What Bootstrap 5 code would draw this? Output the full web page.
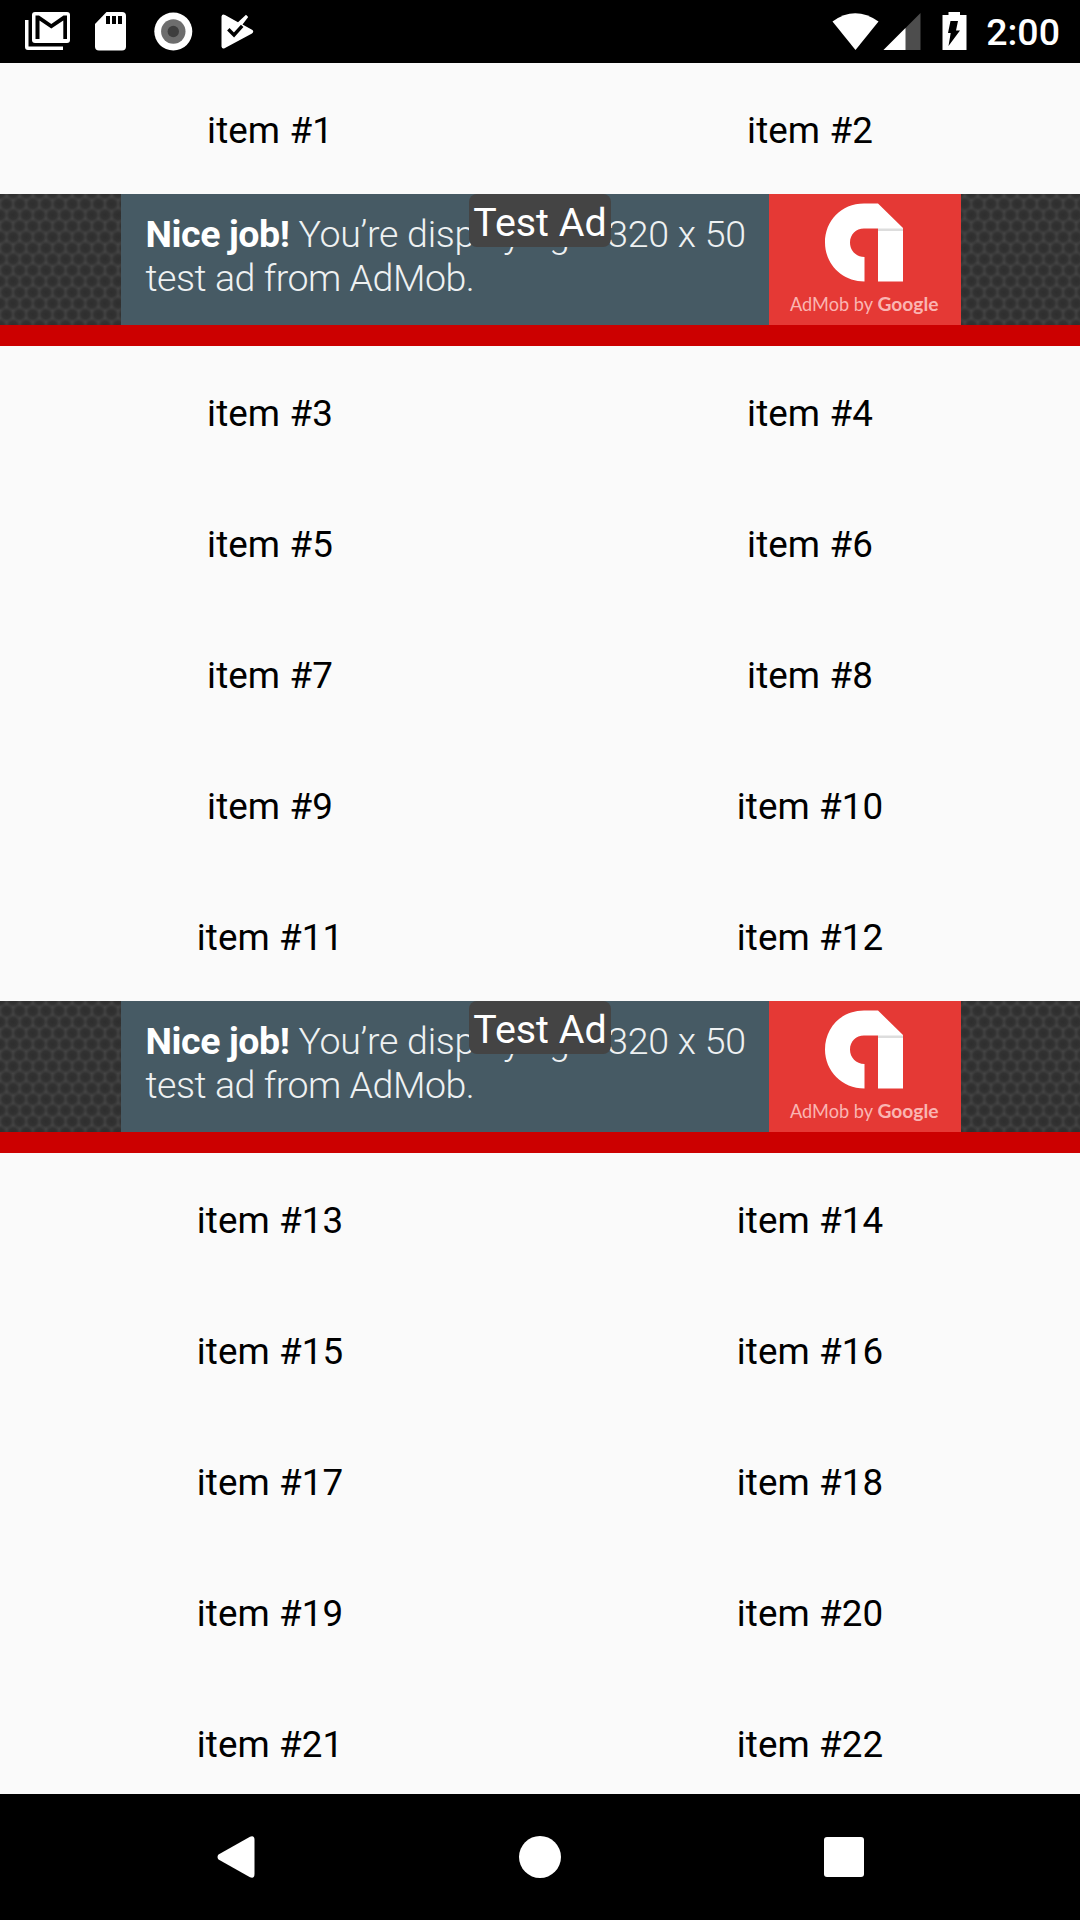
<!DOCTYPE html>
<html lang="en">
<head>
<meta charset="utf-8">
<meta name="viewport" content="width=device-width, initial-scale=1">
<title>Items</title>
<link rel="stylesheet" href="https://cdn.jsdelivr.net/npm/bootstrap@5.3.0/dist/css/bootstrap.min.css">
<style>
body { font-family: Roboto, "Noto Sans", sans-serif; background: #fafafa; color: #000; }
.screen { height: 1920px; }
.status-bar { height: 63px; background: #000; padding-right: 20px; }
.status-bar svg, .nav-bar svg, .creative svg { display: block; flex: none; }
.clock { font-size: 37.5px; font-weight: 500; line-height: 1; color: #fff; margin-left: 19px; padding-top: 3px; }
.item-cell { height: 131px; font-size: 36.75px; padding-top: 4px; letter-spacing: .1px; }
.ad-row { height: 131px; background-color: #393939; }
.creative { width: 840px; background: #465a64; margin-left: 1px; }
.ad-copy { width: 648.5px; padding: 18px 0 0 25px; font-size: 37.5px; line-height: 44px; font-weight: 300; color: #eef1f2; white-space: nowrap; letter-spacing: -.45px; }
.ad-copy b { font-weight: 700; color: #fff; letter-spacing: -.4px; }
.ad-copy .first-line { letter-spacing: -.25px; }
.ad-brand { width: 191.5px; background: #e53935; }
.ad-label { width: 142px; height: 53px; background: #444; color: #fff; border-radius: 8px; font-size: 39.4px; line-height: 57px; white-space: nowrap; }
.separator { height: 21px; background: #c00; }
.nav-bar { height: 126px; background: #000; }
</style>
</head>
<body>
<svg width="0" height="0" class="position-absolute" aria-hidden="true">
  <defs>
    <radialGradient id="dimple"><stop offset="0" stop-color="#2e2e2e"/><stop offset=".55" stop-color="#323232"/><stop offset="1" stop-color="#323232" stop-opacity="0"/></radialGradient>
    <pattern id="mesh" width="13.125" height="22.1" patternUnits="userSpaceOnUse">
      <rect width="14" height="23" fill="#464646"/>
      <g fill="url(#dimple)">
        <circle cx="6.56" cy="10" r="7.500"/>
        <circle cx="0" cy="21" r="7.500"/><circle cx="13.125" cy="21" r="7.500"/>
        <circle cx="0" cy="-1.1" r="7.500"/><circle cx="13.125" cy="-1.1" r="7.500"/>
      </g>
    </pattern>
    <symbol id="admob" viewBox="0 0 191 131">
      <path fill="#fff" d="M109 9.500H95C72 9.500 56 27 56 48.500S73 87.500 95.500 87.500V63C87 63 81 56.500 81 48.500S87 34.500 95 34.500H109V87.500H134V34Z"/>
      <path fill="#ddd" d="M109 34.500h25v2.500h-25z"/>
    </symbol>
  </defs>
</svg>
<div class="screen d-flex flex-column overflow-hidden">
  <header class="status-bar d-flex align-items-center">
    <svg width="280" height="63" fill="#fff">
      <path d="M25 20h3.500v26.500H63v3.500H28q-3 0-3-3z"/>
      <rect x="32" y="12" width="38" height="31" rx="3"/>
      <path fill="#000" d="M35.500 39V15.500h3.500l12.300 8.500 12.200-8.500h3.500V39h-3.700V20.500L51.300 28.500 39.500 20.500V39z"/>
      <path d="M106.500 12H122q4 0 4 4v30.500q0 4-4 4H99q-4 0-4-4V24z"/>
      <path fill="#000" d="M106 16h4v8h-4zM112 16h4v8h-4zM118 16h4v8h-4z"/>
      <circle cx="173.300" cy="31.500" r="19"/><circle cx="173.300" cy="31.500" r="12.200" fill="#6d6d6d"/><circle cx="173.300" cy="31.500" r="5.700" fill="#3e3e3e"/>
      <path d="M221.500 16.500Q222 13.500 225 15L238 22.300L246 14.700L248.200 17L242.500 24.500L252 29.800Q254.500 31.500 252 33.500L225 48Q222 49.500 221.500 46.500z"/>
      <path d="M228.300 29.300l5.700 5.700 8.200-9.200" fill="none" stroke="#000" stroke-width="3.400"/>
    </svg>
    <div class="d-flex align-items-center ms-auto">
      <svg width="148" height="63" fill="#fff">
        <path d="M13.500 21.500Q36 5 59.500 21.500L36.500 50z"/>
        <path fill="#4d4d4d" d="M101.500 13v37H64.500z"/><path d="M86.500 28v22H64.500z"/>
        <path d="M123.500 15h6v-3h11.500v3h6.500v35h-24z"/>
        <path fill="#000" d="M131.500 21h7.500l-2 9.500h4L129.500 46l2.200-13H129z"/>
      </svg>
      <span class="clock">2:00</span>
    </div>
  </header>
  <main id="list" class="flex-grow-1 overflow-hidden"></main>
  <nav class="nav-bar flex-shrink-0">
    <svg width="1080" height="126" fill="#fff">
      <path d="M218.500 60.500L250 42.700Q254.500 41 254.500 46V80Q254.500 85 250 83.300L218.500 65.500Q216.500 63 218.500 60.500z"/>
      <circle cx="540" cy="63" r="21"/>
      <rect x="824" y="43" width="40" height="40" rx="3"/>
    </svg>
  </nav>
</div>
<template id="ad">
  <section class="ad-row position-relative d-flex justify-content-center">
    <svg class="position-absolute top-0 start-0" width="1080" height="131"><rect width="1080" height="131" fill="url(#mesh)"/></svg>
    <div class="creative position-relative d-flex">
      <div class="ad-copy"><b>Nice job!</b><span class="first-line"> You’re displaying a 320 x 50</span><br>test ad from AdMob.</div>
      <div class="ad-brand">
        <svg width="191" height="131">
          <use href="#admob" width="191" height="131"/>
          <g fill="#fab5b2" font-family="Lato, sans-serif" font-size="19.500"><text x="21" y="116.500" textLength="83" lengthAdjust="spacingAndGlyphs">AdMob by</text><text x="108.500" y="116.500" font-weight="700" textLength="61" lengthAdjust="spacingAndGlyphs">Google</text></g>
        </svg>
      </div>
    </div>
    <div class="ad-label position-absolute top-0 start-50 translate-middle-x text-center">Test Ad</div>
  </section>
  <div class="separator"></div>
</template>
<script src="https://cdn.jsdelivr.net/npm/bootstrap@5.3.0/dist/js/bootstrap.bundle.min.js"></script>
<script>
const list = document.getElementById('list');
const ad = document.getElementById('ad');
for (let n = 1; n <= 22; n += 2) {
  const row = document.createElement('div');
  row.className = 'row g-0';
  for (const k of [n, n + 1]) {
    row.insertAdjacentHTML('beforeend', `<div class="col-6 item-cell d-flex align-items-center justify-content-center">item #${k}</div>`);
  }
  list.append(row);
  if (n === 1 || n === 11) list.append(ad.content.cloneNode(true));
}
</script>
</body>
</html>
